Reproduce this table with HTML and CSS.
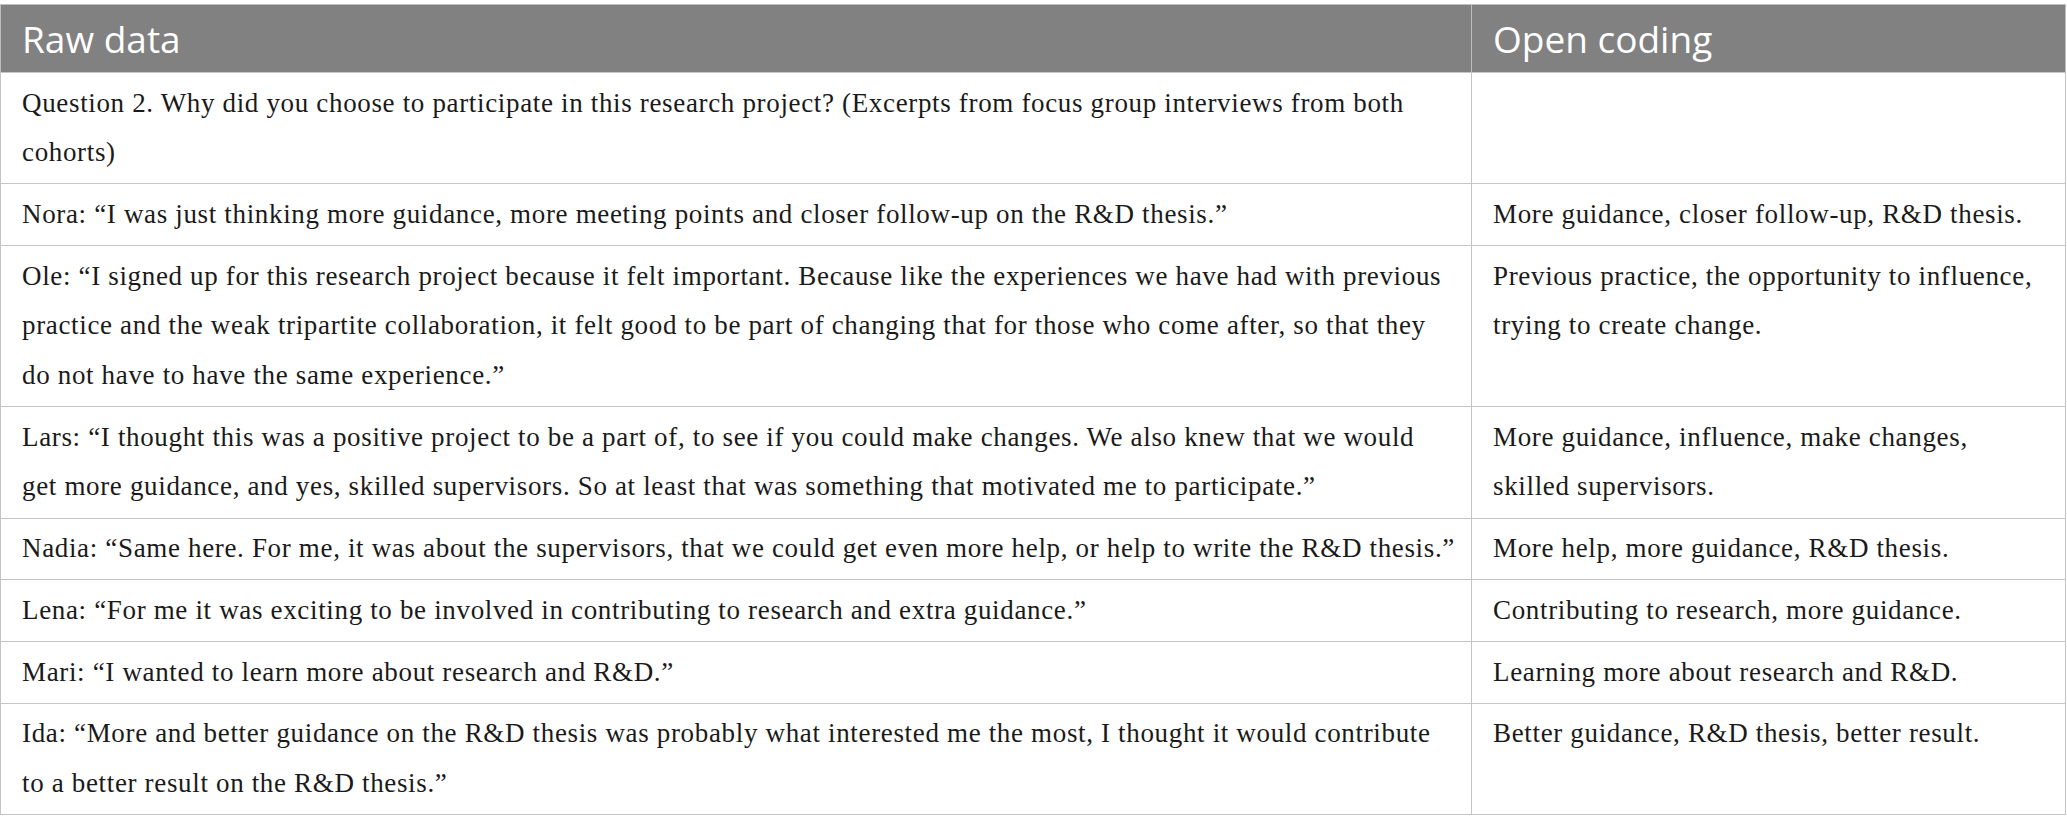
FILE: index.html
```html
<!DOCTYPE html>
<html lang="en">
<head>
<meta charset="utf-8">
<title>Raw data and open coding</title>
<link rel="stylesheet" href="styles.css">
</head>
<body>
<table class="coding-table">
  <colgroup>
    <col class="col-raw">
    <col class="col-open">
  </colgroup>
  <thead>
    <tr>
      <th>Raw data</th>
      <th>Open coding</th>
    </tr>
  </thead>
  <tbody>
    <tr>
      <td>Question 2. Why did you choose to participate in this research project? (Excerpts from focus group interviews from both<br>cohorts)</td>
      <td></td>
    </tr>
    <tr>
      <td>Nora: “I was just thinking more guidance, more meeting points and closer follow-up on the R&amp;D thesis.”</td>
      <td>More guidance, closer follow-up, R&amp;D thesis.</td>
    </tr>
    <tr>
      <td>Ole: “I signed up for this research project because it felt important. Because like the experiences we have had with previous<br>practice and the weak tripartite collaboration, it felt good to be part of changing that for those who come after, so that they<br>do not have to have the same experience.”</td>
      <td>Previous practice, the opportunity to influence,<br>trying to create change.</td>
    </tr>
    <tr>
      <td>Lars: “I thought this was a positive project to be a part of, to see if you could make changes. We also knew that we would<br>get more guidance, and yes, skilled supervisors. So at least that was something that motivated me to participate.”</td>
      <td>More guidance, influence, make changes,<br>skilled supervisors.</td>
    </tr>
    <tr>
      <td>Nadia: “Same here. For me, it was about the supervisors, that we could get even more help, or help to write the R&amp;D thesis.”</td>
      <td>More help, more guidance, R&amp;D thesis.</td>
    </tr>
    <tr>
      <td>Lena: “For me it was exciting to be involved in contributing to research and extra guidance.”</td>
      <td>Contributing to research, more guidance.</td>
    </tr>
    <tr>
      <td>Mari: “I wanted to learn more about research and R&amp;D.”</td>
      <td>Learning more about research and R&amp;D.</td>
    </tr>
    <tr>
      <td>Ida: “More and better guidance on the R&amp;D thesis was probably what interested me the most, I thought it would contribute<br>to a better result on the R&amp;D thesis.”</td>
      <td>Better guidance, R&amp;D thesis, better result.</td>
    </tr>
  </tbody>
</table>
</body>
</html>
```
FILE: styles.css
```css
html, body {
  margin: 0;
  padding: 0;
  background: #ffffff;
}

body {
  padding-top: 4px;
}

.coding-table {
  width: 2066px;
  border-collapse: collapse;
  table-layout: fixed;
  font-family: "Liberation Serif", "Times New Roman", serif;
  color: #1a1a1a;
}

.col-raw {
  width: 1471px;
}

.coding-table th {
  background: #808180;
  color: #ffffff;
  font-family: "Open Sans", "Noto Sans", sans-serif;
  font-weight: 400;
  font-size: 37px;
  line-height: 50px;
  text-align: left;
  padding: 9px 21px 8px;
  border: 1px solid #bdbdbd;
  border-bottom-color: #c4c4c4;
}

.coding-table td {
  font-size: 27px;
  letter-spacing: 0.66px;
  line-height: 49.7px;
  padding: 5.5px 10px 5.5px 21px;
  vertical-align: top;
  border: 1px solid #c4c4c4;
}
```
